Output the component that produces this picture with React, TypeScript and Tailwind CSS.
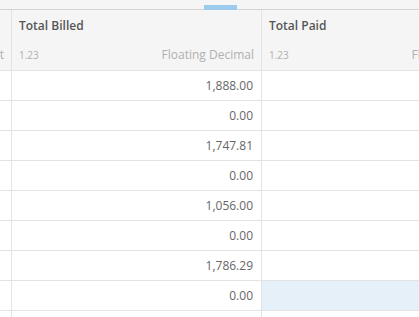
const rows = ['1,888.00', '0.00', '1,747.81', '0.00', '1,056.00', '0.00', '1,786.29', '0.00', ''];

const Header = ({ title, type }: { title: string; type: string }) => (
  <div className="h-[61px] flex flex-col justify-between px-[7px] pt-[7px] pb-[6px] bg-[#f5f5f5] border-b border-[#e3e3e3]">
    <div className="text-[12px] font-semibold text-[#555]">{title}</div>
    <div className="flex justify-between items-baseline whitespace-nowrap">
      <span className="text-[10px] text-[#b0b0b0]">1.23</span>
      <span className="text-[12px] text-[#b0b0b0]">{type}</span>
    </div>
  </div>
);

export default function App() {
  return (
    <div className="w-[419px] h-[317px] overflow-hidden bg-white" style={{ fontFamily: '"Open Sans", sans-serif' }}>
      <div className="relative h-[10px] bg-[#f5f5f5] border-b border-[#d4d4d4]">
        <div className="absolute left-[204px] top-[5px] w-[33px] h-[5px] bg-[#9ccbee]" />
      </div>
      <div className="flex">
        {/* clipped left column */}
        <div className="w-[12px] shrink-0 border-r border-[#e3e3e3] overflow-hidden">
          <div className="h-[61px] flex items-end justify-end pb-[6px] bg-[#f5f5f5] border-b border-[#e3e3e3]">
            <span className="text-[12px] text-[#b0b0b0] whitespace-nowrap pr-[7px]">Text</span>
          </div>
          {rows.map((_, i) => (
            <div key={i} className="h-[30px] border-b border-[#e3e3e3]" />
          ))}
        </div>
        <div className="w-[250px] shrink-0 border-r border-[#e3e3e3]">
          <Header title="Total Billed" type="Floating Decimal" />
          {rows.map((v, i) => (
            <div key={i} className="h-[30px] border-b border-[#e3e3e3] flex items-center justify-end pr-[8px] text-[12px] text-[#666]">
              {v}
            </div>
          ))}
        </div>
        <div className="w-[250px] shrink-0 border-r border-[#e3e3e3]">
          <Header title="Total Paid" type="Floating Decimal" />
          {rows.map((_, i) => (
            <div key={i} className={`h-[30px] border-b border-[#e3e3e3] ${i === 7 ? 'bg-[#e6f0f8]' : ''}`} />
          ))}
        </div>
      </div>
    </div>
  );
}
